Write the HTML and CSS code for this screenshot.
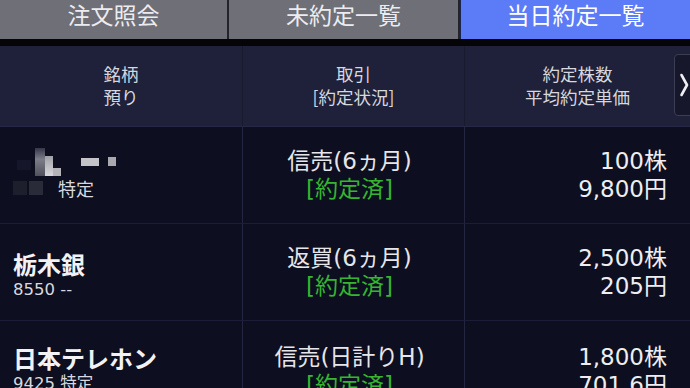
FILE: index.html
```html
<!DOCTYPE html>
<html lang="ja">
<head>
<meta charset="utf-8">
<link rel="stylesheet" href="styles.css">
</head>
<body>
<div class="app">
  <div class="tabs">
    <div class="tab">注文照会</div>
    <div class="tab">未約定一覧</div>
    <div class="tab active">当日約定一覧</div>
  </div>
  <div class="gap"></div>
  <div class="head">
    <div class="hcell">銘柄<br>預り</div>
    <div class="hcell">取引<br>[約定状況]</div>
    <div class="hcell">約定株数<br>平均約定単価</div>
    <div class="more"><svg width="10" height="24" viewBox="0 0 10 24"><path d="M2.5 2 L8 12 L2.5 22" fill="none" stroke="#eeeef3" stroke-width="2.6" stroke-linecap="round" stroke-linejoin="round"/></svg></div>
  </div>
  <div class="row r1">
    <div class="cell name">
      <div class="blur">
        <span class="px p0"></span><span class="px p1"></span><span class="px p2"></span><span class="px p3"></span><span class="px p4"></span><span class="px p5"></span><span class="px p6"></span>
      </div>
      <div class="sub blurline"><span class="bx"></span><span class="bx b2"></span>特定</div>
    </div>
    <div class="cell mid"><div>信売(6ヵ月)</div><div class="green">[約定済]</div></div>
    <div class="cell num"><div>100株</div><div>9,800円</div></div>
  </div>
  <div class="row r2">
    <div class="cell name"><div class="title">栃木銀</div><div class="sub">8550 --</div></div>
    <div class="cell mid"><div>返買(6ヵ月)</div><div class="green">[約定済]</div></div>
    <div class="cell num"><div>2,500株</div><div>205円</div></div>
  </div>
  <div class="row r3">
    <div class="cell name"><div class="title">日本テレホン</div><div class="sub">9425 特定</div></div>
    <div class="cell mid"><div>信売(日計りH)</div><div class="green">[約定済]</div></div>
    <div class="cell num"><div>1,800株</div><div>701.6円</div></div>
  </div>
</div>
</body>
</html>
```
FILE: styles.css
```css
html, body { margin: 0; padding: 0; }
body {
  width: 690px; height: 388px; overflow: hidden;
  background: #0d0e1f;
  font-family: "DejaVu Sans", "Noto Sans CJK JP", sans-serif;
  color: #ececf0;
}
.app { display: flex; flex-direction: column; }
.tabs { display: grid; grid-template-columns: 229px 231px 230px; height: 39px; background: #22232a; }
.tab {
  background: #6e6f77; color: #ececf0; font-size: 23px; line-height: 29px;
  font-family: "Noto Sans CJK JP", sans-serif;
  display: flex; justify-content: center; align-items: flex-start;
  border-right: 2px solid #23242b;
}
.tab.active { background: #5b7bf7; color: #fff; border-right: none; border-left: 1px solid #1c2450; }
.gap { height: 7px; background: #050508; }
.head {
  position: relative; display: grid; grid-template-columns: 242px 222px 226px;
  height: 80px; background: #1e2139; border-bottom: 1px solid #262944;
}
.hcell {
  display: flex; align-items: center; justify-content: center; text-align: center;
  font-size: 17.5px; line-height: 23px; color: #d6d7df; padding-bottom: 2px;
  font-family: "Noto Sans CJK JP", sans-serif;
}
.hcell + .hcell { border-left: 1px solid #181a2e; }
.more {
  position: absolute; right: -4px; top: 8px; width: 20px; height: 62px;
  background: #16172a; border: 1px solid #3b3d52; border-radius: 4px;
  display: flex; align-items: center; justify-content: flex-start; padding-left: 4px; box-sizing: border-box;
}
.row { display: grid; grid-template-columns: 242px 222px 226px; border-bottom: 1px solid #1c1e38; height: 96px; }
.r3 { height: 100px; }
.cell { display: flex; flex-direction: column; justify-content: center; }
.cell + .cell { border-left: 1px solid #24263f; }
.mid { align-items: center; font-size: 23px; line-height: 28px; color: #e6e6ea; padding-right: 8px; }
.green { color: #35b530; }
.num { align-items: flex-end; padding-right: 23px; font-size: 23px; line-height: 28px; color: #eeeef2; }
.name { padding-left: 13px; }
.title { font-size: 24px; font-weight: 700; line-height: 30px; color: #f2f2f5; font-family: "Noto Sans CJK JP", sans-serif; }
.sub { font-size: 16.5px; line-height: 21px; color: #d8d8de; }
.r2 .name { padding-top: 4px; }
.r3 .name { padding-bottom: 6px; }
.blur { display: flex; align-items: flex-end; height: 30px; padding-left: 4px; }
.px { display: inline-block; }
.p0 { width: 14px; height: 10px; background: #15162a; margin-right: 4px; margin-bottom: 6px; }
.p1 { width: 10px; height: 28px; background: linear-gradient(#35364a, #7c7d88 40%, #50515c); }
.p2 { width: 8px; height: 20px; background: linear-gradient(#a0a0a8, #d8d8dc); }
.p3 { width: 8px; height: 8px; background: #b3b3b8; }
.p4 { width: 20px; height: 2px; background: transparent; }
.p5 { width: 18px; height: 8px; background: #c3c3c8; margin-bottom: 10px; }
.p6 { width: 8px; height: 9px; background: #a8a8ae; margin-left: 9px; margin-bottom: 10px; }
.blurline { display: flex; align-items: center; padding-bottom: 4px; font-family: "Noto Sans CJK JP", sans-serif; font-size: 18px; line-height: 24px; }
.bx { display: inline-block; width: 14px; height: 14px; background: #1e1f2c; margin-right: 2px; }
.b2 { background: #2a2b38; margin-right: 15px; }
```
